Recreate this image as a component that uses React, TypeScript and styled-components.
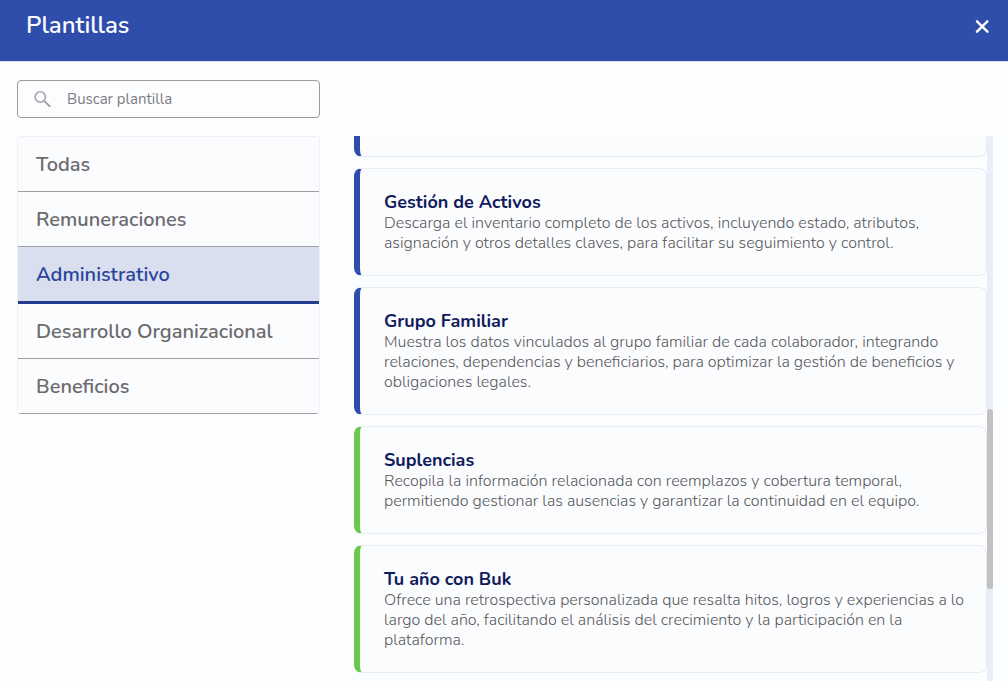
import React, { useState } from "react";
import styled, { createGlobalStyle } from "styled-components";

const GlobalStyle = createGlobalStyle`
  *, *::before, *::after { box-sizing: border-box; }
  body {
    margin: 0;
    background: #fcfdff;
    color: #6b6b6e;
    font-family: Nunito, Lato, "Open Sans", sans-serif;
    font-size: 16px;
    line-height: 20px;
  }
  button, input { font: inherit; color: inherit; }
`;

const Page = styled.div`
  display: flex;
  flex-direction: column;
  height: 100vh;
`;

const Header = styled.header`
  display: flex;
  flex-shrink: 0;
  align-items: center;
  justify-content: space-between;
  padding: 10px 15px 20px 26px;
  background: #2f4daa;
  border-bottom: 1px solid #dde2ee;
`;

const Title = styled.h1`
  margin: 0;
  color: #fafbff;
  font-size: 24px;
  font-weight: 600;
  line-height: 31px;
`;

const CloseButton = styled.button`
  display: flex;
  padding: 4px;
  border: 0;
  background: none;
  color: #fff;
  cursor: pointer;
`;

const Content = styled.main`
  display: grid;
  flex: 1;
  grid-template-columns: 303px minmax(0, 1fr);
  grid-template-rows: 38px minmax(0, 1fr);
  column-gap: 34px;
  row-gap: 18px;
  min-height: 0;
  padding: 18px 15px 0 17px;
`;

const SearchBox = styled.label`
  display: flex;
  align-items: center;
  gap: 15px;
  padding: 0 15px;
  border: 1px solid #9b9b9e;
  border-radius: 4px;
  color: #a5a5a8;
`;

const SearchInput = styled.input`
  flex: 1;
  min-width: 0;
  padding: 0;
  border: 0;
  outline: 0;
  background: none;
  color: #6b6b6e;
  font-size: 15px;
  &::placeholder { color: #7c7c7f; opacity: 1; }
`;

const Categories = styled.nav`
  grid-column: 1;
  align-self: start;
  overflow: hidden;
  border: 1px solid #f0f1f4;
  border-bottom: 0;
  border-radius: 4px;
`;

const Category = styled.button<{ $active: boolean }>`
  display: block;
  width: 100%;
  padding: 16px 18px 14px;
  border: 0;
  border-bottom: ${(p) => (p.$active ? "3px solid #243c90" : "1px solid #a0a0a3")};
  background: ${(p) => (p.$active ? "#d9dfee" : "#fbfcfe")};
  color: ${(p) => (p.$active ? "#2a439b" : "#6b6b6e")};
  font-size: 20px;
  font-weight: 600;
  line-height: 24px;
  text-align: left;
  cursor: pointer;
`;

const Results = styled.section`
  display: flex;
  grid-column: 2;
  min-height: 0;
`;

const CardList = styled.ul`
  display: flex;
  flex: 1;
  flex-direction: column;
  gap: 11px;
  min-width: 0;
  margin: 0;
  padding: 0;
  overflow: hidden;
  list-style: none;
`;

const Card = styled.li<{ $accent: string }>`
  flex-shrink: 0;
  padding: 23px 20px 22px 24px;
  border: 1px solid #e8ecf6;
  border-left: 6px solid ${(p) => p.$accent};
  border-radius: 8px;
  background: #fbfcfe;
`;

const ClippedCard = styled(Card)`
  height: 21px;
  padding: 0;
  border-top: 0;
  border-radius: 0 0 8px 8px;
`;

const CardTitle = styled.h2`
  margin: 0;
  color: #101b5c;
  font-size: 18px;
  font-weight: 700;
  line-height: 21px;
`;

const CardText = styled.p`
  margin: 0;
  color: #57575a;
  font-weight: 300;
`;

const Track = styled.div`
  display: flex;
  flex-direction: column;
  width: 6px;
  border-radius: 3px 3px 0 0;
  background: #e8edf7;
`;

const Thumb = styled.div`
  flex: 0 0 33%;
  margin-top: 273px;
  border-radius: 3px;
  background: #c1c1c2;
`;

const categories = [
  "Todas",
  "Remuneraciones",
  "Administrativo",
  "Desarrollo Organizacional",
  "Beneficios",
];

const BLUE = "#2f4daa";
const GREEN = "#6bc84d";

const templates = [
  {
    title: "Gestión de Activos",
    accent: BLUE,
    text: "Descarga el inventario completo de los activos, incluyendo estado, atributos, asignación y otros detalles claves, para facilitar su seguimiento y control.",
  },
  {
    title: "Grupo Familiar",
    accent: BLUE,
    text: "Muestra los datos vinculados al grupo familiar de cada colaborador, integrando relaciones, dependencias y beneficiarios, para optimizar la gestión de beneficios y obligaciones legales.",
  },
  {
    title: "Suplencias",
    accent: GREEN,
    text: "Recopila la información relacionada con reemplazos y cobertura temporal, permitiendo gestionar las ausencias y garantizar la continuidad en el equipo.",
  },
  {
    title: "Tu año con Buk",
    accent: GREEN,
    text: "Ofrece una retrospectiva personalizada que resalta hitos, logros y experiencias a lo largo del año, facilitando el análisis del crecimiento y la participación en la plataforma.",
  },
];

export default function App() {
  const [active, setActive] = useState("Administrativo");

  return (
    <Page>
      <GlobalStyle />
      <Header>
        <Title>Plantillas</Title>
        <CloseButton type="button" aria-label="Cerrar">
          <svg width="14" height="14" viewBox="0 0 14 14" fill="none" stroke="currentColor" strokeWidth="2.4" strokeLinecap="round">
            <path d="M2 2.3 12.4 12.7M12.4 2.3 2 12.7" />
          </svg>
        </CloseButton>
      </Header>
      <Content>
        <SearchBox>
          <svg width="19" height="19" viewBox="0 0 19 19" fill="none" stroke="currentColor" strokeWidth="1.6">
            <circle cx="7.3" cy="7" r="5.2" />
            <path d="M11 10.7 17.2 16.8" strokeWidth="1.9" />
          </svg>
          <SearchInput type="text" placeholder="Buscar plantilla" aria-label="Buscar plantilla" />
        </SearchBox>
        <Categories>
          {categories.map((name) => (
            <Category key={name} type="button" $active={name === active} onClick={() => setActive(name)}>
              {name}
            </Category>
          ))}
        </Categories>
        <Results>
          <CardList>
            <ClippedCard $accent={BLUE} aria-hidden="true" />
            {templates.map((t) => (
              <Card key={t.title} $accent={t.accent}>
                <CardTitle>{t.title}</CardTitle>
                <CardText>{t.text}</CardText>
              </Card>
            ))}
          </CardList>
          <Track aria-hidden="true">
            <Thumb />
          </Track>
        </Results>
      </Content>
    </Page>
  );
}
